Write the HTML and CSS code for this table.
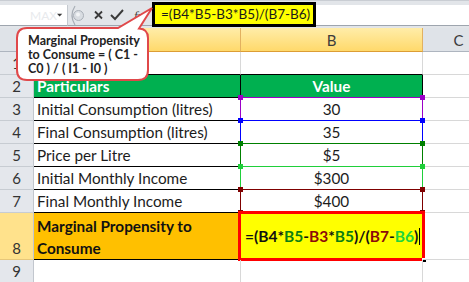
FILE: index.html
```html
<!DOCTYPE html>
<html>
<head>
<meta charset="utf-8">
<link rel="stylesheet" href="styles.css">
</head>
<body>
<div class="app">
  <div class="fbar">
    <div class="namebox"><span class="nb-text">MAX</span>
      <svg class="dd" width="9" height="5" viewBox="0 0 9 5"><path d="M0 0H8L4 4Z" fill="#3a3a3a"/></svg>
    </div>
    <div class="fbtns">
      <svg width="84" height="21" viewBox="0 0 84 21">
        <path d="M7 1 Q1 10.5 7 20" fill="none" stroke="#a8aeb6" stroke-width="1.2"/>
        <circle cx="10.5" cy="10.5" r="5" fill="#d9dde2" stroke="#aab0b8"/>
        <circle cx="10" cy="9.5" r="2" fill="#f2f4f6"/>
        <path d="M27 6.5L34 13.5M34 6.5L27 13.5" stroke="#3a3a3a" stroke-width="1.8"/>
        <path d="M43 10L47 14L55 5" fill="none" stroke="#3a3a3a" stroke-width="1.9"/>
        <text x="66" y="15" class="fx">fx</text>
      </svg>
    </div>
    <div class="finput"><span class="fhl">=(B4*B5-B3*B5)/(B7-B6)</span></div>
  </div>

  <div class="sheet">
    <div class="hd corner"></div>
    <div class="hd col sel">A</div>
    <div class="hd col sel">B</div>
    <div class="hd col">C</div>

    <div class="rh">1</div>
    <div class="c tt"></div>
    <div class="c tt"></div>
    <div class="c"></div>

    <div class="rh">2</div>
    <div class="c tb green">Particulars</div>
    <div class="c tb green ctr">Value</div>
    <div class="c"></div>

    <div class="rh">3</div>
    <div class="c tb">Initial Consumption (litres)</div>
    <div class="c tb ctr">30<span class="ref purple"><i class="q tl"></i><i class="q tr"></i><i class="q bl"></i><i class="q br"></i></span></div>
    <div class="c"></div>

    <div class="rh">4</div>
    <div class="c tb">Final Consumption (litres)</div>
    <div class="c tb ctr">35<span class="ref blue"><i class="q tl"></i><i class="q tr"></i><i class="q bl"></i><i class="q br"></i></span></div>
    <div class="c"></div>

    <div class="rh">5</div>
    <div class="c tb">Price per Litre</div>
    <div class="c tb ctr">$5<span class="ref dgreen"><i class="q tl"></i><i class="q tr"></i><i class="q bl"></i><i class="q br"></i></span></div>
    <div class="c"></div>

    <div class="rh">6</div>
    <div class="c tb">Initial Monthly Income</div>
    <div class="c tb ctr">$300<span class="ref lgreen"><i class="q tl"></i><i class="q tr"></i><i class="q bl"></i><i class="q br"></i></span></div>
    <div class="c"></div>

    <div class="rh">7</div>
    <div class="c tb">Final Monthly Income</div>
    <div class="c tb ctr">$400<span class="ref dred"><i class="q tl"></i><i class="q tr"></i><i class="q bl"></i><i class="q br"></i></span></div>
    <div class="c"></div>

    <div class="rh rsel">8</div>
    <div class="c tb orange">Marginal Propensity to<br>Consume</div>
    <div class="c tb yellow"><span class="ftxt">=(B4*<b class="k1">B5</b>-<b class="k2">B3</b>*<b class="k1">B5</b>)/(<b class="k2">B7</b>-<b class="k3">B6</b>)</span><span class="caret"></span><span class="selbox"><i class="fill"></i></span></div>
    <div class="c"></div>

    <div class="rh">9</div>
    <div class="c"></div>
    <div class="c"></div>
    <div class="c"></div>
  </div>

  <div class="callout">
    <svg class="bubble" width="150" height="85" viewBox="0 0 150 85">
      <path d="M17 28 H108 L142 8 L129 28.5 Q138 29 138 38 V70 Q138 80 128 80 H17 Q7 80 7 70 V38 Q7 28 17 28 Z" fill="#ffffff" stroke="#e0484a" stroke-width="2"/>
    </svg>
    <div class="ctext">Marginal Propensity<br>to Consume = ( C1 -<br>C0 ) / ( I1 - I0 )</div>
  </div>
</div>
</body>
</html>
```

FILE: styles.css
```css
* { box-sizing: border-box; }
html, body { margin: 0; padding: 0; background: #ffffff; }
body { width: 469px; height: 282px; overflow: hidden; font-family: Lato, "Liberation Sans", sans-serif; }

.app { position: relative; width: 469px; height: 282px; overflow: hidden; }

/* formula bar */
.fbar {
  display: flex;
  height: 28px;
  padding-top: 4px;
  background: #e2e5e9;
  border-top: 1px solid #c9cdd3;
}
.fbar > div { height: 21px; }
.namebox {
  width: 68px;
  background: #ffffff;
  border-right: 1px solid #c4c9cf;
  border-bottom: 1px solid #9ea5ae;
  display: flex;
  align-items: center;
  justify-content: space-between;
  padding: 0 4px 0 30px;
}
.nb-text { font-size: 12px; color: #e8eaed; }
.dd { display: block; margin-top: 1px; }
.fbtns { width: 84px; border-bottom: 1px solid #9ea5ae; }
.fbtns svg { display: block; }
.fx { font-family: "Liberation Serif", serif; font-style: italic; font-size: 13px; fill: #444; }
.finput {
  flex: 1;
  background: #ffffff;
  border-bottom: 1px solid #9ea5ae;
}
.fhl {
  display: inline-block;
  margin-top: -3px;
  height: 25px;
  width: 164px;
  padding-left: 6px;
  background: #ffff00;
  border: 3px solid #000000;
  font-size: 13.5px;
  line-height: 19px;
  color: #1a1a1a;
  white-space: nowrap;
  overflow: hidden;
}

/* sheet grid */
.sheet {
  display: grid;
  grid-template-columns: 34px 207px 182px 72px;
  grid-template-rows: 24px repeat(7, 23px) 47px 23px;
  font-size: 15.3px;
  color: #1c1c1c;
}
.hd {
  background: #dfe3e8;
  border-right: 1px solid #c2c7ce;
  border-bottom: 1px solid #aeb5bf;
  display: flex;
  align-items: center;
  justify-content: center;
  color: #3c3c3c;
  font-size: 15px;
}
.hd.sel {
  background: linear-gradient(#ffeda9, #ffd96b);
  border-right: 1px solid #e2b160;
  border-bottom: 1px solid #dc9d35;
}
.rh {
  background: #e4e7ec;
  border-right: 1px solid #c2c7ce;
  border-bottom: 1px solid #c7ccd2;
  display: flex;
  align-items: flex-end;
  justify-content: center;
  color: #333333;
  font-size: 15px;
  line-height: 21px;
}
.rh.rsel { background: #ffe28c; border-bottom-color: #e6c77a; }

.c {
  position: relative;
  border-right: 1px solid #d8d8d8;
  border-bottom: 1px solid #d8d8d8;
  padding-left: 3px;
  display: flex;
  align-items: flex-end;
  line-height: 21px;
  white-space: nowrap;
}
.c.tt { border-bottom-color: #000000; }
.c.tb { border-right-color: #000000; border-bottom-color: #000000; }
.c.ctr { justify-content: center; padding-left: 0; }
.green { background: #00b050; color: #ffffff; font-weight: 700; }
.orange { background: #ffc000; font-weight: 700; line-height: 22px; color: #111111; }
.yellow { background: #ffff00; align-items: center; padding-left: 4px; }

/* reference highlight boxes */
.ref { position: absolute; top: -1px; left: -1px; right: -1px; bottom: -1px; border: 1px solid; }
.purple { border-color: #9b00c8; }
.blue { border-color: #0000ff; }
.dgreen { border-color: #008000; }
.lgreen { border-color: #1fcf3a; }
.dred { border-color: #7f0000; }
.q { position: absolute; width: 5px; height: 5px; }
.purple .q { background: #9b00c8; }
.blue .q { background: #0000ff; }
.dgreen .q { background: #008000; }
.lgreen .q { background: #1fcf3a; }
.dred .q { background: #7f0000; }
.tl { top: -3px; left: -3px; }
.tr { top: -3px; right: -3px; }
.bl { bottom: -3px; left: -3px; }
.br { bottom: -3px; right: -3px; }

/* B8 formula */
.ftxt { font-weight: 700; color: #111111; font-size: 15.5px; }
.ftxt b { font-weight: 700; }
.k1 { color: #0b7d12; }
.k2 { color: #8b0a0a; }
.k3 { color: #22d43c; }
.caret { display: inline-block; width: 1px; height: 17px; background: #000; margin-left: 1px; }
.selbox {
  position: absolute;
  top: -2px; left: -3px; right: -3px; bottom: -2px;
  border: 3px solid #ff0000;
}
.fill { position: absolute; right: -5px; bottom: -5px; width: 5px; height: 5px; background: #000; border: 1px solid #fff; }

/* callout */
.callout { position: absolute; left: 10px; top: 0; width: 150px; height: 85px; }
.bubble { position: absolute; left: 0; top: 0; }
.ctext {
  position: absolute;
  left: 18px;
  top: 34px;
  font-family: Lato, "Liberation Sans", sans-serif;
  font-weight: 700;
  font-size: 12.5px;
  line-height: 14px;
  color: #222222;
  white-space: nowrap;
}
```
